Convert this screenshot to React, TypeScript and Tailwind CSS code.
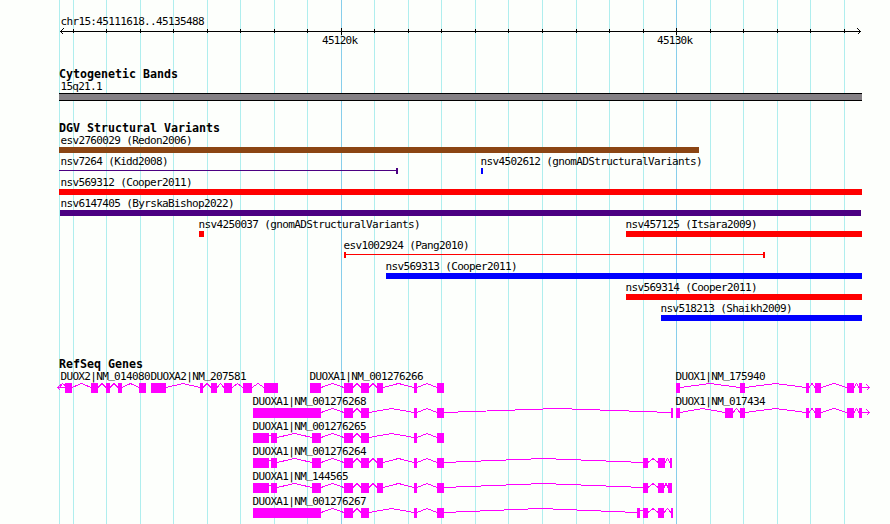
interface Variant {
  name: string
  start: number
  end: number
  color: string
  shape?: 'box' | 'span'
  openStart?: boolean
}

interface Gene {
  name: string
  exons: [number, number][]
  arrow?: 'left' | 'right'
}

const WIDTH = 890
const LEFT = 59
const MAJOR_TICKS = [
  { x: 341, label: '45120k' },
  { x: 676, label: '45130k' },
]
const MINOR_TICKS = [
  73, 106, 140, 173, 207, 240, 274, 307, 374, 408, 441, 475, 508, 542, 576, 609,
  643, 710, 743, 777, 810, 844,
]

const RED = '#ff0000'
const BLUE = '#0000ff'
const INDIGO = '#4b0082'
const BROWN = '#8b4513'
const MAGENTA = '#ff00ff'

const variantRows: Variant[][] = [
  [{ name: 'esv2760029 (Redon2006)', start: 59, end: 699, color: BROWN }],
  [
    { name: 'nsv7264 (Kidd2008)', start: 59, end: 398, color: INDIGO, shape: 'span', openStart: true },
    { name: 'nsv4502612 (gnomADStructuralVariants)', start: 481, end: 483, color: BLUE },
  ],
  [{ name: 'nsv569312 (Cooper2011)', start: 59, end: 862, color: RED }],
  [{ name: 'nsv6147405 (ByrskaBishop2022)', start: 60, end: 861, color: INDIGO }],
  [
    { name: 'nsv4250037 (gnomADStructuralVariants)', start: 199, end: 204, color: RED },
    { name: 'nsv457125 (Itsara2009)', start: 626, end: 862, color: RED },
  ],
  [{ name: 'esv1002924 (Pang2010)', start: 344, end: 765, color: RED, shape: 'span' }],
  [{ name: 'nsv569313 (Cooper2011)', start: 386, end: 862, color: BLUE }],
  [{ name: 'nsv569314 (Cooper2011)', start: 626, end: 862, color: RED }],
  [{ name: 'nsv518213 (Shaikh2009)', start: 661, end: 862, color: BLUE }],
]

const geneRows: Gene[][] = [
  [
    {
      name: 'DUOX2|NM_014080',
      exons: [[65, 72], [91, 98], [106, 110], [118, 122], [139, 146]],
      arrow: 'left',
    },
    {
      name: 'DUOXA2|NM_207581',
      exons: [[151, 166], [200, 203], [211, 217], [224, 232], [243, 252], [264, 278]],
    },
    {
      name: 'DUOXA1|NM_001276266',
      exons: [[310, 321], [344, 353], [361, 369], [377, 383], [414, 417], [437, 444]],
    },
    {
      name: 'DUOX1|NM_175940',
      exons: [[676, 680], [740, 745], [806, 809], [815, 821], [847, 854], [859, 862]],
      arrow: 'right',
    },
  ],
  [
    {
      name: 'DUOXA1|NM_001276268',
      exons: [[253, 321], [344, 353], [361, 369], [414, 417], [437, 444], [671, 673]],
    },
    {
      name: 'DUOX1|NM_017434',
      exons: [[676, 680], [725, 733], [740, 745], [806, 809], [815, 821], [847, 854], [859, 862]],
      arrow: 'right',
    },
  ],
  [
    {
      name: 'DUOXA1|NM_001276265',
      exons: [[253, 269], [271, 277], [312, 321], [344, 353], [361, 369], [414, 417], [437, 444]],
    },
  ],
  [
    {
      name: 'DUOXA1|NM_001276264',
      exons: [
        [253, 269], [271, 277], [312, 321], [344, 353], [361, 369], [377, 383],
        [414, 417], [437, 444], [643, 648], [658, 665], [670, 672],
      ],
    },
  ],
  [
    {
      name: 'DUOXA1|NM_144565',
      exons: [
        [253, 269], [271, 277], [312, 321], [344, 353], [361, 369], [377, 383],
        [414, 417], [437, 444], [643, 648], [658, 664], [668, 672],
      ],
    },
  ],
  [
    {
      name: 'DUOXA1|NM_001276267',
      exons: [
        [253, 321], [344, 353], [361, 369], [414, 417], [437, 444],
        [637, 640], [643, 648], [658, 664], [671, 673],
      ],
    },
  ],
]

function Label({ x, y = 9, children }: { x: number; y?: number; children: string }) {
  // The underscore is lifted so it sits on the baseline, clear of the glyph below
  const [head, tail] = children.split('_')
  return (
    <text
      x={x + 0.5}
      y={y}
      textLength={children.length * 6}
      className="fill-black font-['DejaVu_Sans_Mono',monospace] text-[11px]"
    >
      {head}
      {tail && (
        <>
          <tspan dy={-2}>_</tspan>
          <tspan dy={2}>{tail}</tspan>
        </>
      )}
    </text>
  )
}

function TrackTitle({ children }: { children: string }) {
  return (
    <h2 className="h-[13px] pl-[59px] font-['DejaVu_Sans_Mono',monospace] text-[11.63px] leading-[13px] font-bold whitespace-pre">
      {children}
    </h2>
  )
}

function GridLines() {
  return (
    <svg className="absolute inset-0" width={WIDTH} height={524} shapeRendering="crispEdges">
      {[LEFT, ...MINOR_TICKS].map((x) => (
        <rect key={x} x={x} width={1} height={524} fill="#afeeee" />
      ))}
      {MAJOR_TICKS.map(({ x }) => (
        <rect key={x} x={x} width={1} height={524} fill="#87ceeb" />
      ))}
    </svg>
  )
}

function Ruler() {
  return (
    <svg className="block" width={WIDTH} height={68}>
      <g shapeRendering="crispEdges">
        <rect x={60} y={31} width={801} height={1} />
        {MINOR_TICKS.map((x) => (
          <rect key={x} x={x} y={29} width={1} height={4} />
        ))}
        {MAJOR_TICKS.map(({ x }) => (
          <rect key={x} x={x} y={28} width={1} height={7} />
        ))}
        <path d="M63.5 28.5 L60.5 31.5 L63.5 34.5 M857.5 28.5 L860.5 31.5 L857.5 34.5" fill="none" stroke="#000" />
      </g>
      <Label x={60} y={25}>chr15:45111618..45135488</Label>
      {MAJOR_TICKS.map(({ x, label }) => (
        <Label key={label} x={x - 19.5} y={44}>{label}</Label>
      ))}
    </svg>
  )
}

function VariantGlyph({ variant }: { variant: Variant }) {
  const { name, start, end, color, shape = 'box', openStart } = variant
  return (
    <g fill={color}>
      {shape === 'box' ? (
        <rect x={start} y={12} width={end - start} height={6} />
      ) : (
        <>
          <rect x={start} y={14} width={end - start} height={1} />
          {!openStart && <rect x={start} y={12} width={2} height={6} />}
          <rect x={end - 2} y={12} width={2} height={6} />
        </>
      )}
      <Label x={Math.max(start - 1, 60)}>{name}</Label>
    </g>
  )
}

function GeneGlyph({ gene }: { gene: Gene }) {
  const { name, exons, arrow } = gene
  const first = exons[0][0]
  const last = exons[exons.length - 1][1]

  // Introns are hats that peak midway between neighbouring exons
  const introns = exons.slice(1).map(([next], i) => {
    const prev = exons[i][1]
    const mid = (prev + next) / 2
    return next - prev < 4
      ? `M${prev} 14.5 H${next}`
      : `M${prev} 16.5 L${mid} 12.5 L${next} 16.5`
  })

  return (
    <g>
      <g shapeRendering="crispEdges" stroke={MAGENTA} fill="none">
        <path d={introns.join(' ')} />
        {arrow === 'left' && (
          <path d={`M${first} 16.5 H57 M60.5 13.5 L57.5 16.5 L60.5 19.5 M59.5 16.5 L62.5 12.5 L${first} 14.5`} />
        )}
        {arrow === 'right' && (
          <path d={`M${last} 16.5 H870 M866.5 13.5 L869.5 16.5 L866.5 19.5`} />
        )}
      </g>
      {exons.map(([start, end]) => (
        <rect key={start} x={start} y={12} width={end - start} height={10} fill={MAGENTA} />
      ))}
      <Label x={arrow === 'left' ? 60 : first - 1}>{name}</Label>
    </g>
  )
}

export default function App() {
  return (
    <main className="relative h-[524px] w-[890px] overflow-hidden bg-[#fdfffc] text-black">
      <GridLines />
      <div className="relative flex flex-col">
        <Ruler />

        <section>
          <TrackTitle>Cytogenetic Bands</TrackTitle>
          <svg className="block overflow-visible" width={WIDTH} height={20}>
            <Label x={60}>15q21.1</Label>
            <rect x={LEFT} y={12} width={803} height={8} />
            <rect x={LEFT} y={13} width={803} height={6} fill="#848084" />
          </svg>
        </section>

        <section className="mt-[21px]">
          <TrackTitle>DGV Structural Variants</TrackTitle>
          {variantRows.map((row, i) => (
            <svg key={i} className="block overflow-visible" width={WIDTH} height={21}>
              {row.map((variant) => (
                <VariantGlyph key={variant.name} variant={variant} />
              ))}
            </svg>
          ))}
        </section>

        <section className="mt-[34px]">
          <TrackTitle>RefSeq Genes</TrackTitle>
          {geneRows.map((row, i) => (
            <svg key={i} className="block overflow-visible" width={WIDTH} height={25}>
              {row.map((gene) => (
                <GeneGlyph key={gene.name} gene={gene} />
              ))}
            </svg>
          ))}
        </section>
      </div>
    </main>
  )
}
